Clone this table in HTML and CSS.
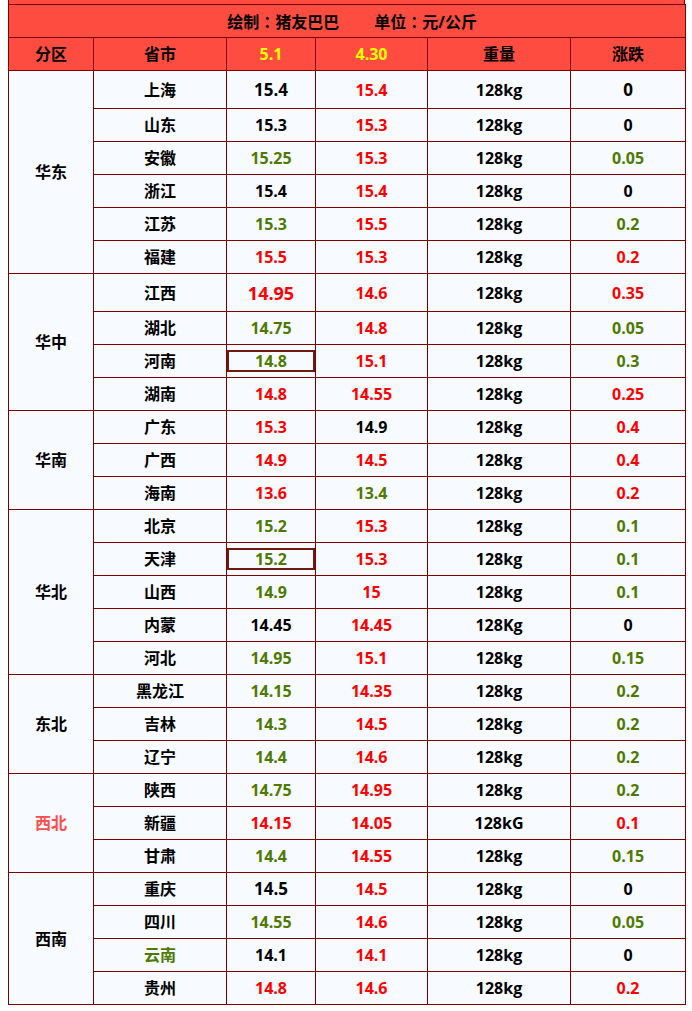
FILE: index.html
```html
<!DOCTYPE html>
<html lang="zh-CN">
<head>
<meta charset="utf-8">
<title>猪价表</title>
<link rel="stylesheet" href="styles.css">
</head>
<body>
<div class="strip"></div>
<table class="price">
  <colgroup>
    <col class="c1"><col class="c2"><col class="c3"><col class="c4"><col class="c5"><col class="c6">
  </colgroup>
  <thead>
    <tr class="title"><td colspan="6"><span>绘制<span class="colon" lang="ja">：</span>猪友巴巴</span><span class="unit">单位<span class="colon" lang="ja">：</span>元/公斤</span></td></tr>
    <tr class="head"><th>分区</th><th>省市</th><th class="y">5.1</th><th class="y">4.30</th><th>重量</th><th>涨跌</th></tr>
  </thead>
  <tbody>
    <tr class="tall"><td class="reg" rowspan="6">华东</td><td>上海</td><td class="big">15.4</td><td class="r">15.4</td><td>128kg</td><td class="big">0</td></tr>
    <tr><td>山东</td><td>15.3</td><td class="r">15.3</td><td>128kg</td><td>0</td></tr>
    <tr><td>安徽</td><td class="g">15.25</td><td class="r">15.3</td><td>128kg</td><td class="g">0.05</td></tr>
    <tr><td>浙江</td><td>15.4</td><td class="r">15.4</td><td>128kg</td><td>0</td></tr>
    <tr><td>江苏</td><td class="g">15.3</td><td class="r">15.5</td><td>128kg</td><td class="g">0.2</td></tr>
    <tr><td>福建</td><td class="r">15.5</td><td class="r">15.3</td><td>128kg</td><td class="r">0.2</td></tr>

    <tr class="tall"><td class="reg" rowspan="4">华中</td><td>江西</td><td class="r bigger">14.95</td><td class="r">14.6</td><td>128kg</td><td class="r">0.35</td></tr>
    <tr><td>湖北</td><td class="g">14.75</td><td class="r">14.8</td><td>128kg</td><td class="g">0.05</td></tr>
    <tr><td>河南</td><td class="g sel"><div class="box">14.8</div></td><td class="r">15.1</td><td>128kg</td><td class="g">0.3</td></tr>
    <tr><td>湖南</td><td class="r">14.8</td><td class="r">14.55</td><td>128kg</td><td class="r">0.25</td></tr>

    <tr><td class="reg" rowspan="3">华南</td><td>广东</td><td class="r">15.3</td><td>14.9</td><td>128kg</td><td class="r">0.4</td></tr>
    <tr><td>广西</td><td class="r">14.9</td><td class="r">14.5</td><td>128kg</td><td class="r">0.4</td></tr>
    <tr><td>海南</td><td class="r">13.6</td><td class="g">13.4</td><td>128kg</td><td class="r">0.2</td></tr>

    <tr><td class="reg" rowspan="5">华北</td><td>北京</td><td class="g">15.2</td><td class="r">15.3</td><td>128kg</td><td class="g">0.1</td></tr>
    <tr><td>天津</td><td class="g sel"><div class="box">15.2</div></td><td class="r">15.3</td><td>128kg</td><td class="g">0.1</td></tr>
    <tr><td>山西</td><td class="g">14.9</td><td class="r">15</td><td>128kg</td><td class="g">0.1</td></tr>
    <tr><td>内蒙</td><td>14.45</td><td class="r">14.45</td><td>128Kg</td><td>0</td></tr>
    <tr><td>河北</td><td class="g">14.95</td><td class="r">15.1</td><td>128kg</td><td class="g">0.15</td></tr>

    <tr><td class="reg" rowspan="3">东北</td><td>黑龙江</td><td class="g">14.15</td><td class="r">14.35</td><td>128kg</td><td class="g">0.2</td></tr>
    <tr><td>吉林</td><td class="g">14.3</td><td class="r">14.5</td><td>128kg</td><td class="g">0.2</td></tr>
    <tr><td>辽宁</td><td class="g">14.4</td><td class="r">14.6</td><td>128kg</td><td class="g">0.2</td></tr>

    <tr><td class="reg nw" rowspan="3">西北</td><td>陕西</td><td class="g">14.75</td><td class="r">14.95</td><td>128kg</td><td class="g">0.2</td></tr>
    <tr><td>新疆</td><td class="r">14.15</td><td class="r">14.05</td><td>128kG</td><td class="r">0.1</td></tr>
    <tr><td>甘肃</td><td class="g">14.4</td><td class="r">14.55</td><td>128kg</td><td class="g">0.15</td></tr>

    <tr><td class="reg" rowspan="4">西南</td><td>重庆</td><td class="big">14.5</td><td class="r">14.5</td><td>128kg</td><td>0</td></tr>
    <tr><td>四川</td><td class="g">14.55</td><td class="r">14.6</td><td>128kg</td><td class="g">0.05</td></tr>
    <tr><td class="g">云南</td><td>14.1</td><td class="r">14.1</td><td>128kg</td><td>0</td></tr>
    <tr><td>贵州</td><td class="r">14.8</td><td class="r">14.6</td><td>128kg</td><td class="r">0.2</td></tr>
  </tbody>
</table>
</body>
</html>
```

FILE: styles.css
```css
html, body {
  margin: 0;
  padding: 0;
  background: #ffffff;
}
body {
  padding: 0 8px;
  font-family: "Open Sans", "Noto Sans CJK SC", sans-serif;
  font-weight: 700;
  font-size: 16px;
  color: #000000;
}
.strip {
  width: 677px;
  height: 4px;
  box-sizing: border-box;
  background: #ff4c40;
  border-left: 1px solid #7f0000;
  border-right: 1px solid #7f0000;
}
.price {
  width: 677px;
  border-collapse: collapse;
  table-layout: fixed;
}
.c1 { width: 85px; }
.c2 { width: 133px; }
.c3 { width: 89px; }
.c4 { width: 112px; }
.c5 { width: 143px; }
.c6 { width: 115px; }
.price td, .price th {
  border: 1px solid #7f0000;
  padding: 0;
  text-align: center;
  vertical-align: middle;
  line-height: 20px;
  font-weight: 700;
}
.price tr { height: 33px; }
.price tr.tall { height: 38px; }
.title td, .head th {
  background: #ff4c40;
}
.title td { padding-left: 10px; }
.colon { font-family: "Noto Sans CJK JP", sans-serif; }
.unit { margin-left: 35px; }
.head .y { color: #ffff00; }
.price tbody td { background: #f7faff; }
.r { color: #ff0000; }
.g { color: #4e7a00; }
.big { font-size: 17px; }
.bigger { font-size: 18px; }
.nw { color: #ff4c4c; }
.box {
  margin: 0 0 1px 0;
  height: 18px;
  border: 2px solid #6e1a10;
  line-height: 18px;
}
```
